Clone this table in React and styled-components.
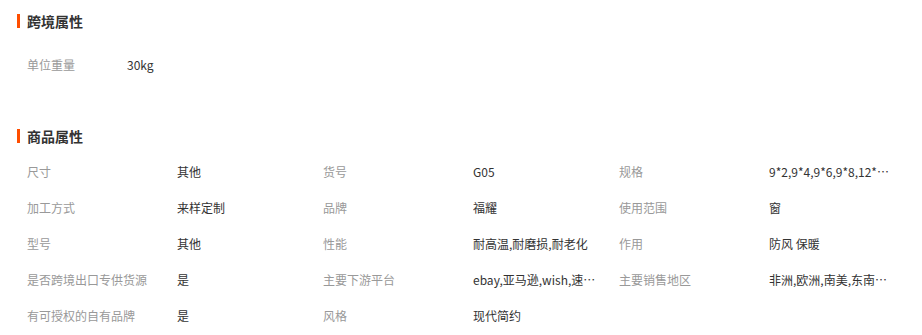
import React from "react";
import styled, { createGlobalStyle } from "styled-components";

const GlobalStyle = createGlobalStyle`
  body {
    margin: 0;
    background: #fff;
    font-family: "Noto Sans CJK SC", "Liberation Sans", sans-serif;
    font-size: 12px;
    color: #333;
  }
`;

const Page = styled.div`
  width: 922px;
  padding: 11px 0 0 17px;
  box-sizing: border-box;
`;

const Section = styled.section`
  margin-bottom: ${({ $after }) => $after || 0}px;
`;

const Title = styled.h3`
  margin: 0;
  display: flex;
  align-items: center;
  height: 20px;
  font-size: 14px;
  font-weight: bold;
  color: #333;

  &::before {
    content: "";
    width: 3px;
    height: 14px;
    background: #ff4e00;
    margin-right: 7px;
  }
`;

const Grid = styled.div`
  display: grid;
  grid-template-columns: repeat(${({ $cols }) => $cols}, 296px);
  margin-top: ${({ $top }) => $top}px;
  padding-left: 10px;
`;

const Item = styled.div`
  display: flex;
  align-items: center;
  height: 36px;
`;

const Label = styled.span`
  flex: 0 0 ${({ $w }) => $w}px;
  color: #999;
  white-space: nowrap;
`;

const Value = styled.span`
  max-width: 124px;
  color: #333;
  white-space: nowrap;
  overflow: hidden;
  text-overflow: ellipsis;
`;

const crossBorder = [["单位重量", "30kg"]];

const goods = [
  ["尺寸", "其他"],
  ["货号", "G05"],
  ["规格", "9*2,9*4,9*6,9*8,12*2,12*4"],
  ["加工方式", "来样定制"],
  ["品牌", "福耀"],
  ["使用范围", "窗"],
  ["型号", "其他"],
  ["性能", "耐高温,耐磨损,耐老化"],
  ["作用", "防风 保暖"],
  ["是否跨境出口专供货源", "是"],
  ["主要下游平台", "ebay,亚马逊,wish,速卖通"],
  ["主要销售地区", "非洲,欧洲,南美,东南亚,北美"],
  ["有可授权的自有品牌", "是"],
  ["风格", "现代简约"],
];

export default function App() {
  return (
    <Page>
      <GlobalStyle />
      <Section $after={44}>
        <Title>跨境属性</Title>
        <Grid $cols={1} $top={15}>
          {crossBorder.map(([k, v]) => (
            <Item key={k}>
              <Label $w={100}>{k}</Label>
              <Value>{v}</Value>
            </Item>
          ))}
        </Grid>
      </Section>
      <Section>
        <Title>商品属性</Title>
        <Grid $cols={3} $top={7}>
          {goods.map(([k, v]) => (
            <Item key={k}>
              <Label $w={150}>{k}</Label>
              <Value title={v}>{v}</Value>
            </Item>
          ))}
        </Grid>
      </Section>
    </Page>
  );
}
